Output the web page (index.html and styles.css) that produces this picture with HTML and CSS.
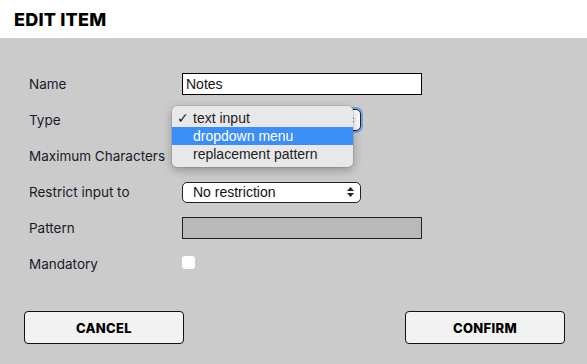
FILE: index.html
```html
<!DOCTYPE html>
<html lang="en">
<head>
    <meta charset="UTF-8">
    <title>Edit Item</title>
    <link rel="stylesheet" href="styles.css">
</head>
<body>
    <div class="header">EDIT ITEM</div>

    <div class="panel">
        <div class="form">
            <label class="label">Name</label>
            <div class="field"><div class="text-input">Notes</div></div>

            <label class="label">Type</label>
            <div class="field">
                <div class="select select-type focused">
                    <span class="select-value"></span>
                    <svg class="arrows" width="7" height="10" viewBox="0 0 7 10"><path d="M3.5 0 L7 4 H0 Z M0 6 H7 L3.5 10 Z" fill="#222"/></svg>
                </div>
                <div class="menu">
                    <div class="menu-item"><span class="check">✓</span>text input</div>
                    <div class="menu-item active">dropdown menu</div>
                    <div class="menu-item">replacement pattern</div>
                </div>
            </div>

            <label class="label">Maximum Characters</label>
            <div class="field"></div>

            <label class="label">Restrict input to</label>
            <div class="field">
                <div class="select">
                    <span class="select-value">No restriction</span>
                    <svg class="arrows" width="7" height="10" viewBox="0 0 7 10"><path d="M3.5 0 L7 4 H0 Z M0 6 H7 L3.5 10 Z" fill="#222"/></svg>
                </div>
            </div>

            <label class="label">Pattern</label>
            <div class="field"><div class="text-input disabled"></div></div>

            <label class="label">Mandatory</label>
            <div class="field"><div class="checkbox"></div></div>
        </div>

        <div class="actions">
            <button class="btn">CANCEL</button>
            <button class="btn">CONFIRM</button>
        </div>
    </div>
</body>
</html>
```

FILE: styles.css
```css
* {
    margin: 0;
    padding: 0;
    box-sizing: border-box;
}

body {
    font-family: Inter, 'Noto Sans', sans-serif;
    background: #cbcbcb;
    width: 587px;
    height: 364px;
    overflow: hidden;
    color: #111;
}

.header {
    background: white;
    height: 38px;
    padding-left: 14px;
    display: flex;
    align-items: center;
    font-size: 18px;
    font-weight: 800;
    letter-spacing: 0.2px;
    color: #000;
}

.panel {
    padding: 28px 22px 0 24px;
}

.form {
    display: grid;
    grid-template-columns: 153px 1fr;
    grid-auto-rows: 36px;
    padding-left: 5px;
}

.label {
    display: flex;
    align-items: center;
    font-size: 13.5px;
    color: #1a1a2a;
}

.field {
    position: relative;
    display: flex;
    align-items: center;
}

.text-input {
    width: 240px;
    height: 22px;
    border: 1px solid #000;
    background: white;
    font-family: 'Liberation Sans', Arial, sans-serif;
    font-size: 14px;
    padding: 2px 3px;
    line-height: 16px;
}

.text-input.disabled {
    background: #b9b9b9;
    border-color: #222;
}

.select {
    width: 179px;
    height: 21px;
    border: 1px solid #222;
    border-radius: 5px;
    background: white;
    display: flex;
    align-items: center;
    justify-content: space-between;
    padding: 0 6px 0 10px;
    font-family: 'Liberation Sans', Arial, sans-serif;
    font-size: 14px;
}

.select-type {
    height: 22px;
}

.select.focused {
    box-shadow: 0 0 0 2px #6fa4e8;
}

.arrows {
    display: block;
}

.menu {
    position: absolute;
    left: -10px;
    top: 4px;
    width: 181px;
    padding: 3px 0 4px;
    background: #e8e8ea;
    border-radius: 5px;
    box-shadow: 0 3px 10px rgba(0, 0, 0, 0.3), 0 0 0 0.5px rgba(0, 0, 0, 0.15);
    font-family: 'Liberation Sans', Arial, sans-serif;
    font-size: 14px;
    color: #222;
    z-index: 2;
}

.menu-item {
    position: relative;
    height: 18px;
    line-height: 18px;
    padding-left: 21px;
}

.menu-item.active {
    background: #3b8ef6;
    color: white;
}

.check {
    position: absolute;
    left: 5px;
    font-size: 14px;
}

.checkbox {
    width: 13px;
    height: 13px;
    background: white;
    border-radius: 3px;
    margin-top: -4px;
}

.actions {
    display: flex;
    justify-content: space-between;
    margin-top: 29px;
}

.btn {
    width: 160px;
    height: 33px;
    background: #f2f2f2;
    border: 1px solid #111;
    border-radius: 4px;
    font-family: Inter, 'Noto Sans', sans-serif;
    font-size: 13px;
    font-weight: 800;
    color: #000;
    letter-spacing: 0.3px;
}
```
